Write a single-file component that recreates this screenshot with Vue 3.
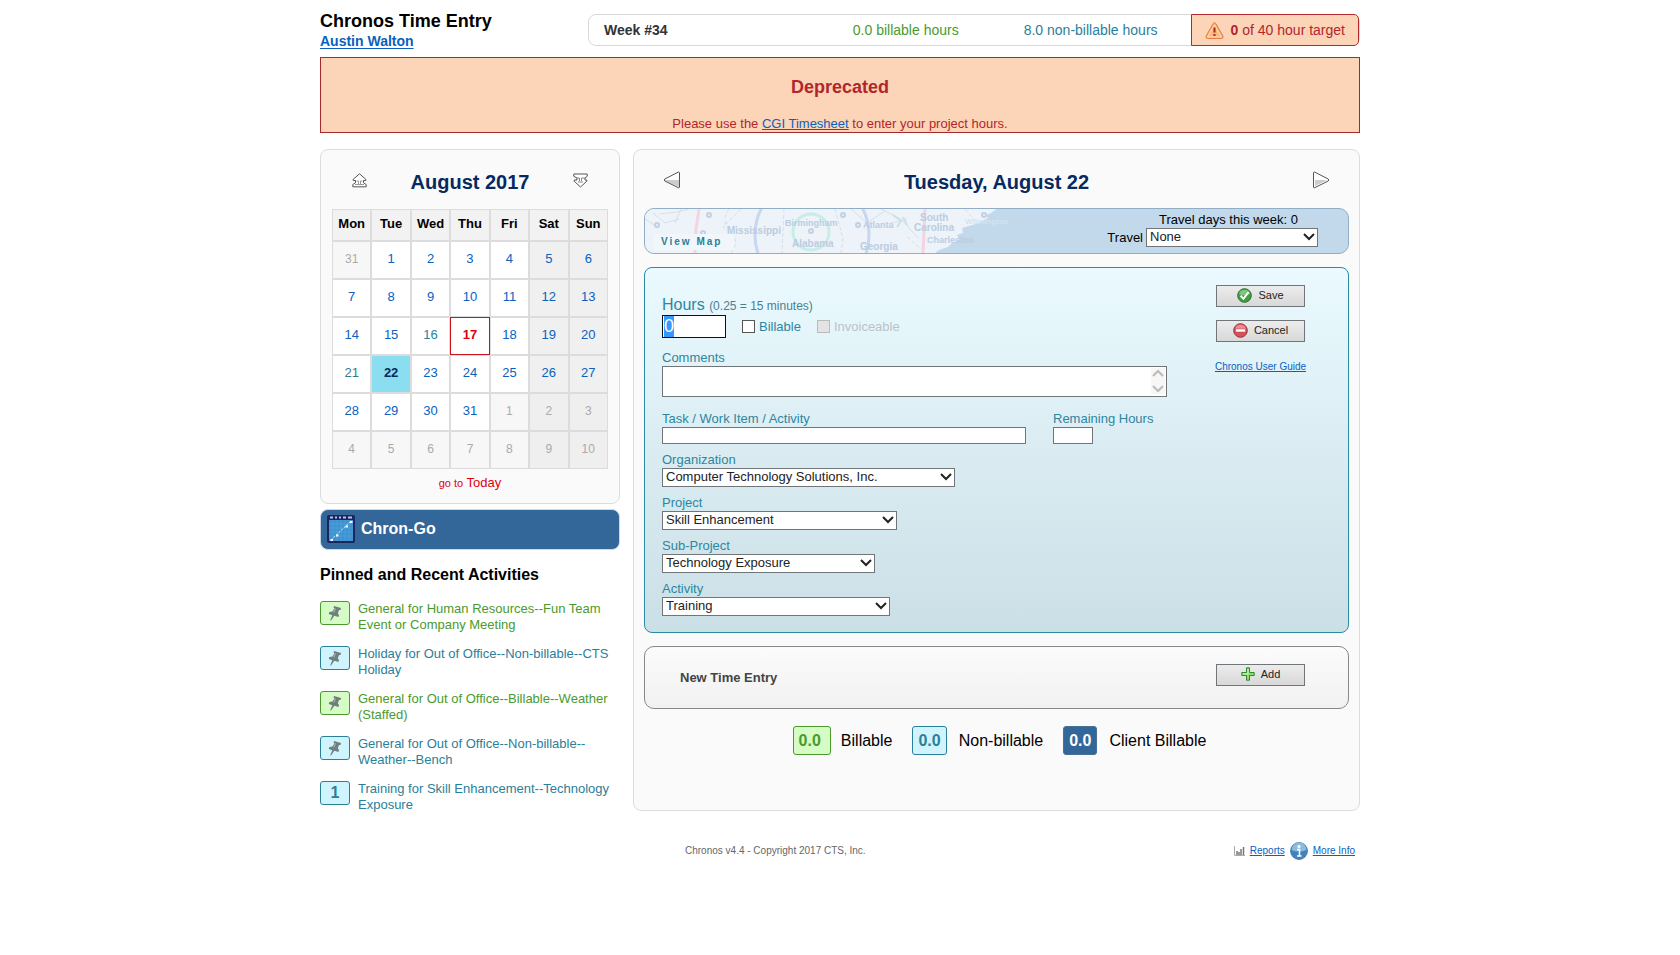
<script setup>
import { onMounted, ref } from 'vue'

const weekdays = ['Mon', 'Tue', 'Wed', 'Thu', 'Fri', 'Sat', 'Sun']

// Six weeks starting on Monday, July 31
const weeks = Array.from({ length: 6 }, (_, w) =>
  Array.from({ length: 7 }, (_, d) => {
    const offset = w * 7 + d
    const other = offset < 1 || offset > 31
    const day = offset < 1 ? 31 : offset > 31 ? offset - 31 : offset
    return {
      day,
      other,
      weekend: d > 4,
      logged: !other && (day === 16 || day === 21),
      today: !other && day === 17,
      selected: !other && day === 22
    }
  })
)

const activities = [
  { kind: 'billable', text: 'General for Human Resources--Fun Team Event or Company Meeting' },
  { kind: 'nonbillable', text: 'Holiday for Out of Office--Non-billable--CTS Holiday' },
  { kind: 'billable', text: 'General for Out of Office--Billable--Weather (Staffed)' },
  { kind: 'nonbillable', text: 'General for Out of Office--Non-billable--Weather--Bench' },
  { kind: 'nonbillable', text: 'Training for Skill Enhancement--Technology Exposure', count: 1 }
]

const choices = [
  { id: 'organization', label: 'Organization', value: 'Computer Technology Solutions, Inc.' },
  { id: 'project', label: 'Project', value: 'Skill Enhancement' },
  { id: 'subproject', label: 'Sub-Project', value: 'Technology Exposure' },
  { id: 'activity', label: 'Activity', value: 'Training' }
]

const hours = ref('0')
const hoursInput = ref(null)

onMounted(() => {
  hoursInput.value.focus()
  hoursInput.value.select()
})
</script>

<template>
  <div class="page">
    <header class="top">
      <div class="brand">
        <h1>Chronos Time Entry</h1>
        <a href="#user">Austin Walton</a>
      </div>
      <div class="stats">
        <strong class="week">Week #34</strong>
        <span class="stat green">0.0 billable hours</span>
        <span class="stat teal">8.0 non-billable hours</span>
        <div class="target">
          <svg width="19" height="17" viewBox="0 0 19 17" aria-hidden="true">
            <path d="M8.4 1.3 Q9.5 0 10.6 1.3 L18 14.3 Q18.4 16.3 16.7 16.4 H2.3 Q.6 16.3 1 14.3Z" fill="#fbb77c" stroke="#e3733a" />
            <path d="M9.5 3 L16.3 15 H2.7Z" fill="none" stroke="#fde0bd" />
            <path d="M9.5 5.5 V10.5 M9.5 12 V14" stroke="#a52a22" stroke-width="2" />
          </svg>
          <span><b>0</b> of 40 hour target</span>
        </div>
      </div>
    </header>

    <section class="banner">
      <h2>Deprecated</h2>
      <p>Please use the <a href="#timesheet">CGI Timesheet</a> to enter your project hours.</p>
    </section>

    <div class="columns">
      <aside>
        <section class="panel calendar">
          <div class="panel-head">
            <button class="nav" type="button" aria-label="Previous month">
              <svg width="15" height="15" viewBox="0 0 15 15" aria-hidden="true">
                <path d="M7.5 .8 L13.8 6.3 V7.5 H11.5 V9.8 L14.2 11.5 V13.8 H.8 V11.5 L3.5 9.8 V7.5 H1.2 V6.3Z" fill="#fff" stroke="#555" />
                <path d="M4.5 8 H6.5 V11 M10.5 8 H8.5 V11 M3 11.5 H12" fill="none" stroke="#999" />
              </svg>
            </button>
            <h2>August 2017</h2>
            <button class="nav" type="button" aria-label="Next month">
              <svg width="15" height="15" viewBox="0 0 15 15" aria-hidden="true">
                <path d="M.8 1 H14.2 V3.3 L12 5 V7 H13.8 V8.2 L7.5 14 L1.2 8.2 V7 H4 V5 L.8 3.3Z" fill="#fff" stroke="#555" />
                <path d="M4 5 H6.5 V8 M12 5 H8.5 V8 M5 9 H10" fill="none" stroke="#888" />
              </svg>
            </button>
          </div>
          <table>
            <thead>
              <tr>
                <th v-for="name in weekdays" :key="name" scope="col">{{ name }}</th>
              </tr>
            </thead>
            <tbody>
              <tr v-for="(week, w) in weeks" :key="w">
                <td
                  v-for="cell in week"
                  :key="cell.day"
                  :class="{ other: cell.other, weekend: cell.weekend, logged: cell.logged, today: cell.today, selected: cell.selected }"
                >
                  <a href="#day">{{ cell.day }}</a>
                </td>
              </tr>
            </tbody>
          </table>
          <a class="goto" href="#today"><small>go to</small> Today</a>
        </section>

        <a class="chrongo" href="#chrongo">
          <svg width="28" height="28" viewBox="0 0 28 28" aria-hidden="true">
            <rect width="28" height="28" rx="2" fill="#1d2560" />
            <rect x="2" y="5" width="24" height="21" fill="#3d92cf" />
            <path d="M6 5V26M10 5V26M14 5V26M18 5V26M22 5V26M2 9H26M2 13H26M2 17H26M2 21H26" stroke="#5aaadd" stroke-width=".5" />
            <path d="M3 2.5H6M8 2.5H10M12 2.5H14M16 2.5H19M21 2.5H25" stroke="#b8c3e8" stroke-width="2" />
            <path d="M4 25 L24 6" stroke="#d6ecfa" stroke-dasharray="2 1.5" />
            <path d="M3.500 24h2.500v2h-2.500zM9 19.500h2.500v2H9zM18.500 10.500H21v2h-2.500zM23 6h2.500v2H23z" fill="#fff" />
          </svg>
          Chron-Go
        </a>

        <h3>Pinned and Recent Activities</h3>
        <ul class="activities">
          <li v-for="item in activities" :key="item.text" :class="item.kind">
            <span class="chip">
              <template v-if="item.count">{{ item.count }}</template>
              <svg v-else width="14" height="16" viewBox="0 0 14 16" aria-hidden="true">
                <path d="M6 1 L13 3 L12.500 5 L11 5 L9.800 8.300 L11 10 L10.500 12 L6.300 10.800 L3 15.500 L2.200 15.200 L4.300 10.200 L.8 9 L1.300 7 L4.500 6.500 L6.500 3.300 L5.500 2.500Z" fill="#6f7f7f" />
                <path d="M7.500 3.500 L5.800 7.500" stroke="#a9b8b8" />
              </svg>
            </span>
            <a href="#activity-entry">{{ item.text }}</a>
          </li>
        </ul>
      </aside>

      <main class="panel">
        <div class="panel-head day-head">
          <button class="nav" type="button" aria-label="Previous day">
            <svg width="18" height="18" viewBox="0 0 18 18" aria-hidden="true">
              <path d="M15.500 1 Q16.500 1 16.500 2 V16 Q16.500 17 15.500 16.800 L1.800 10 Q.5 9 1.800 8Z" fill="#fff" />
              <path d="M2 9 H16 V16 L3 10.300Z" fill="#ccc" />
              <path d="M15.500 1 Q16.500 1 16.500 2 V16 Q16.500 17 15.500 16.800 L1.800 10 Q.5 9 1.800 8Z" fill="none" stroke="#555" />
            </svg>
          </button>
          <h2>Tuesday, August 22</h2>
          <button class="nav" type="button" aria-label="Next day">
            <svg width="18" height="18" viewBox="0 0 18 18" aria-hidden="true">
              <path d="M2.500 1 Q1.500 1 1.500 2 V16 Q1.500 17 2.500 16.800 L16.200 10 Q17.500 9 16.200 8Z" fill="#fff" />
              <path d="M14 9 H3 V15 L13 10.300Z" fill="#ccc" />
              <path d="M2.500 1 Q1.500 1 1.500 2 V16 Q1.500 17 2.500 16.800 L16.200 10 Q17.500 9 16.200 8Z" fill="none" stroke="#555" />
            </svg>
          </button>
        </div>

        <section class="travel">
          <svg class="map" width="370" height="44" viewBox="0 0 370 44" aria-hidden="true">
            <path d="M0 0H352L346 4L341 6L343 9L334 14L324 17L317 19L318 24L312 26L314 31L307 34L303 38L294 41L290 44H0Z" fill="#edf3f8" />
            <g fill="none" stroke="#d3e0ea">
              <path d="M0 10 L14 19 M8 4 L20 14 L34 10 M14 5 L32 3 L44 0 M36 0 L30 14" />
              <path d="M84 0 Q76 12 84 20 M96 0 L78 18 L88 26 Q94 34 86 44 M139 0 L137 44 M190 0 L198 30 L196 44 M262 28 L276 40 M320 0 L330 12" stroke-dasharray="4 2" />
              <path d="M206 0 L222 14 L240 2 M236 0 L256 10 L274 30 M246 14 L262 10" />
            </g>
            <path d="M248 6 L256 12 L252 18 M258 8 L262 16" fill="none" stroke="#c9e2e6" stroke-width="2" />
            <g fill="none" stroke="#f5d3e2" stroke-width="3">
              <path d="M54 0 Q52 14 51 20 L50 44" />
              <path d="M280 0 L279 22 L278 44" />
            </g>
            <circle cx="167" cy="26" r="57" fill="none" stroke="#c5d8f0" stroke-width="3" />
            <circle cx="166" cy="23" r="18" fill="none" stroke="#c6ede6" stroke-width="3" />
            <g fill="none" stroke="#c3d0e4" stroke-width="2">
              <circle cx="64" cy="6" r="2" />
              <circle cx="12" cy="16" r="2" />
              <circle cx="58" cy="24" r="2" />
              <circle cx="166" cy="22" r="2" />
              <circle cx="198" cy="6" r="2" />
              <circle cx="213" cy="16" r="2" />
              <circle cx="339" cy="6" r="2" />
            </g>
            <g class="states">
              <text x="82" y="25">Mississippi</text>
              <text x="147" y="38">Alabama</text>
              <text x="215" y="41">Georgia</text>
              <text x="275" y="12">South</text>
              <text x="269" y="22">Carolina</text>
            </g>
            <g class="towns">
              <text x="140" y="17">Birmingham</text>
              <text x="218" y="19">Atlanta</text>
              <text x="282" y="34">Charleston</text>
              <text class="coast" x="320" y="15">Wilmington</text>
            </g>
          </svg>
          <a class="view-map" href="#map">View Map</a>
          <div class="travel-form">
            <span>Travel days this week: 0</span>
            <div class="travel-row">
              <label for="travel">Travel</label>
              <span class="select travel-select">
                <select id="travel"><option>None</option></select>
                <svg width="12" height="8" viewBox="0 0 12 8" aria-hidden="true"><path d="M1 1 L6 6 L11 1" /></svg>
              </span>
            </div>
          </div>
        </section>

        <form class="entry" @submit.prevent>
          <div class="fields">
            <label class="hours-label" for="hours">Hours <small>(0.25 = 15 minutes)</small></label>
            <div class="hours-row">
              <input id="hours" ref="hoursInput" v-model="hours" class="hours" type="text" />
              <label class="tick"><input type="checkbox" /> Billable</label>
              <label class="tick off"><input type="checkbox" disabled /> Invoiceable</label>
            </div>
            <div class="field comments">
              <label for="comments">Comments</label>
              <div class="area">
                <textarea id="comments"></textarea>
                <svg width="14" height="26" viewBox="0 0 14 26" aria-hidden="true">
                  <path d="M2 8 L7 3 L12 8 M2 18 L7 23 L12 18" />
                </svg>
              </div>
            </div>
            <div class="task-row">
              <div class="field task">
                <label for="task">Task / Work Item / Activity</label>
                <input id="task" type="text" />
              </div>
              <div class="field remaining">
                <label for="remaining">Remaining Hours</label>
                <input id="remaining" type="text" />
              </div>
            </div>
            <div v-for="choice in choices" :key="choice.id" class="field choice">
              <label :for="choice.id">{{ choice.label }}</label>
              <span class="select" :class="choice.id">
                <select :id="choice.id"><option>{{ choice.value }}</option></select>
                <svg width="12" height="8" viewBox="0 0 12 8" aria-hidden="true"><path d="M1 1 L6 6 L11 1" /></svg>
              </span>
            </div>
          </div>
          <div class="actions">
            <button class="action" type="submit">
              <svg width="15" height="15" viewBox="0 0 15 15" aria-hidden="true">
                <circle cx="7.500" cy="7.500" r="6.800" fill="#3f9c41" stroke="#2c7030" />
                <path d="M2 6 A5.700 5.700 0 0 1 13 6 Q8 9 2 6Z" fill="#7cc67a" />
                <path d="M3.500 7.800 L6.500 10.800 L11.500 4" fill="none" stroke="#fff" stroke-width="2" />
              </svg>
              Save
            </button>
            <button class="action" type="button">
              <svg width="15" height="15" viewBox="0 0 15 15" aria-hidden="true">
                <circle cx="7.500" cy="7.500" r="6.800" fill="#d9505a" stroke="#9e2f3a" />
                <path d="M2 6 A5.700 5.700 0 0 1 13 6Z" fill="#e98d92" />
                <rect x="2.500" y="6" width="10" height="3" fill="#fff" stroke="#b04048" stroke-width=".5" />
              </svg>
              Cancel
            </button>
            <a class="guide" href="#guide">Chronos User Guide</a>
          </div>
        </form>

        <section class="new-entry">
          <strong>New Time Entry</strong>
          <button class="action" type="button">
            <svg width="14" height="14" viewBox="0 0 14 14" aria-hidden="true">
              <path d="M5.500 .8H8.500V5.500H13.200V8.500H8.500V13.200H5.500V8.500H.8V5.500H5.500Z" fill="#8fdc6c" stroke="#2f8a2f" />
              <path d="M7 2V7H2" fill="none" stroke="#d3f7bd" />
            </svg>
            Add
          </button>
        </section>

        <div class="legend">
          <span class="total billable wide">0.0</span><span>Billable</span>
          <span class="total nonbillable">0.0</span><span>Non-billable</span>
          <span class="total client">0.0</span><span>Client Billable</span>
        </div>
      </main>
    </div>

    <footer>
      <span class="copyright">Chronos v4.4 - Copyright 2017 CTS, Inc.</span>
      <nav>
        <svg width="11" height="10" viewBox="0 0 11 10" aria-hidden="true">
          <path d="M.5 0V9.500H11" fill="none" stroke="#aaa" />
          <path d="M3 5V9M5 6V9M7 3V9M9.500 1V9" stroke="#777" stroke-width="1.500" />
        </svg>
        <a href="#reports">Reports</a>
        <svg width="18" height="18" viewBox="0 0 18 18" aria-hidden="true">
          <circle cx="9" cy="9" r="8.400" fill="#3f82bd" stroke="#4a7aa3" />
          <path d="M1.500 8 A7.500 7.500 0 0 1 16.500 8 Q9 11 1.500 8Z" fill="#8cbbe0" />
          <circle cx="9" cy="4.500" r="1.600" fill="#fff" />
          <path d="M7 7.500H9.500V13.500M7 14H11.500" fill="none" stroke="#fff" stroke-width="1.500" />
        </svg>
        <a href="#info">More Info</a>
      </nav>
    </footer>
  </div>
</template>

<style>
body {
  background: #fff;
}
</style>

<style scoped>
.page {
  max-width: 1040px;
  margin: 0 auto;
  padding-top: 10px;
  font-family: "Liberation Sans", Arial, sans-serif;
  font-size: 13px;
  line-height: 16px;
  color: #000;
}
.page *,
.page *::before {
  box-sizing: border-box;
}
h1, h2, h3, p, ul {
  margin: 0;
  padding: 0;
}
a {
  color: #0a61c0;
}
button,
input,
select,
textarea {
  font-family: inherit;
  margin: 0;
}
svg {
  flex: none;
}
.green {
  color: #4a9a2c;
}
.teal {
  color: #2a8099;
}

/* Header */
.top {
  display: flex;
  justify-content: space-between;
  height: 47px;
}
.brand h1 {
  font-size: 18px;
  line-height: 22px;
}
.brand a {
  display: block;
  font-size: 14px;
  font-weight: bold;
  line-height: 18px;
  text-underline-offset: 2px;
}
.stats {
  display: flex;
  align-items: center;
  width: 772px;
  height: 32px;
  margin-top: 4px;
  padding-left: 15px;
  border: 1px solid #d8d8d8;
  border-radius: 8px;
  font-size: 14px;
}
.week {
  flex: 1;
  color: #333;
}
.stat {
  margin-right: 65px;
}
.stat.teal {
  margin-right: 33px;
}
.target {
  display: flex;
  align-items: center;
  gap: 7px;
  height: 32px;
  padding: 0 13px;
  border: 1px solid #b32a2e;
  border-radius: 0 5px 5px 0;
  background: #fcd4b8;
  color: #b2262b;
}

/* Deprecation banner */
.banner {
  padding-top: 17px;
  border: 1px solid #a52a2a;
  background: #fcd4b8;
  color: #b2262b;
  text-align: center;
}
.banner h2 {
  margin-bottom: 17px;
  font-size: 18px;
  line-height: 24px;
}

/* Panels */
.columns {
  display: grid;
  grid-template-columns: 300px minmax(0, 1fr);
  align-items: start;
  gap: 13px;
  margin-top: 16px;
}
.panel {
  border: 1px solid #dcdcdc;
  border-radius: 8px;
  background: #fafafa;
}
.panel-head {
  display: flex;
  justify-content: space-between;
  align-items: center;
  padding: 21px 20px 16px;
}
.panel-head h2 {
  font-size: 20px;
  line-height: 22px;
  color: #062a60;
}
.nav {
  display: flex;
  padding: 0;
  border: 0;
  background: none;
}
.nav svg {
  margin-bottom: 4px;
}

/* Calendar */
.calendar {
  padding: 0 11px 11px;
  text-align: center;
}
table {
  width: 100%;
  table-layout: fixed;
  border-collapse: separate;
  border-spacing: 0;
}
th,
td {
  padding: 0 0 2px;
  border: 1px solid #dcdcdc;
}
th {
  height: 32px;
  background: #f2f2f2;
}
td {
  height: 38px;
  background: #fff;
}
td a {
  text-decoration: none;
}
td.weekend {
  background: #f0f0f0;
}
td.other {
  background: #f7f7f7;
  font-size: 12px;
}
td.other.weekend {
  background: #efefef;
}
td.other a {
  color: #aaa;
}
td.logged a {
  color: #2a8099;
}
td.today {
  border-color: #c8141c;
  font-weight: bold;
}
td.today a {
  color: #e00010;
}
td.selected {
  background: #8adeef;
  font-weight: bold;
}
td.selected a {
  color: #062a60;
}
.goto {
  display: block;
  margin-top: 5px;
  line-height: 18px;
  color: #e00010;
  text-decoration: none;
}
.goto small {
  font-size: 11px;
}

.chrongo {
  display: flex;
  align-items: center;
  gap: 6px;
  height: 41px;
  margin-top: 5px;
  padding: 0 0 2px 6px;
  border: 1px solid #cbd9e8;
  border-radius: 8px;
  background: #336699;
  color: #fff;
  font-size: 16px;
  font-weight: bold;
  text-decoration: none;
}
h3 {
  margin: 15px 0 16px;
  font-size: 16px;
  line-height: 20px;
}
.activities {
  display: grid;
  gap: 13px;
  list-style: none;
}
.activities li {
  display: flex;
  align-items: flex-start;
  gap: 8px;
}
.activities a {
  color: inherit;
  text-decoration: none;
}
.billable {
  color: #4a9a2c;
}
.nonbillable {
  color: #2a8099;
}
.chip {
  display: flex;
  flex: none;
  align-items: center;
  justify-content: center;
  width: 30px;
  height: 24px;
  border: 1px solid;
  border-radius: 3px;
  font-size: 16px;
  font-weight: bold;
}
.billable .chip,
.total.billable {
  background: #d4fcc4;
}
.nonbillable .chip,
.total.nonbillable {
  background: #d0f4fd;
}

/* Day panel */
main {
  padding: 0 10px 55px;
}
.day-head {
  padding: 21px 19px 15px;
}
.travel {
  position: relative;
  display: flex;
  justify-content: flex-end;
  height: 46px;
  padding-right: 30px;
  border: 1px solid #92aec6;
  border-radius: 10px;
  background: #c1d9ea;
  overflow: hidden;
}
.map {
  position: absolute;
  left: 0;
  top: 0;
}
.map text {
  font-weight: bold;
  fill: #b9cde2;
}
.states text {
  font-size: 10px;
}
.towns text {
  font-size: 9px;
}
.towns .coast {
  font-size: 8px;
  fill: #d3e3f0;
}
.view-map {
  position: absolute;
  left: 8px;
  bottom: 3px;
  padding: 0 12px 0 8px;
  background: #f1f6fa;
  color: #2a8099;
  font-size: 10px;
  font-weight: bold;
  letter-spacing: 2px;
  text-decoration: none;
}
.travel-form {
  display: flex;
  flex-direction: column;
  align-items: flex-end;
  padding-top: 3px;
}
.travel-form > span {
  margin-right: 20px;
}
.travel-row {
  display: flex;
  align-items: center;
  gap: 3px;
}
.select {
  position: relative;
  display: block;
  max-width: 100%;
}
.select select {
  display: block;
  width: 100%;
  height: 19px;
  padding: 0 18px 1px 3px;
  border: 1px solid #70757a;
  border-radius: 0;
  background: #fff;
  color: #222;
  font-size: 13px;
  line-height: 16px;
  appearance: none;
}
.select svg {
  position: absolute;
  right: 3px;
  top: 5px;
  fill: none;
  stroke: #222;
  stroke-width: 2;
  pointer-events: none;
}
.travel-select {
  width: 172px;
}

.entry {
  display: flex;
  justify-content: space-between;
  margin-top: 13px;
  padding: 17px 43px 16px 17px;
  border: 1px solid #2a8ca0;
  border-radius: 8px;
  background: linear-gradient(#eafaff, #cbdfe6);
  color: #2e86a0;
}
.fields {
  flex: 1;
  max-width: 505px;
  padding-top: 10px;
}
.fields label {
  display: block;
}
.fields .hours-label {
  height: 20px;
  font-size: 16px;
  line-height: 20px;
}
.hours-label small {
  font-size: 12px;
  color: #4b7f90;
}
.hours-row {
  display: flex;
  align-items: center;
}
.fields input[type="text"] {
  display: block;
  height: 17px;
  padding: 0 2px;
  border: 1px solid #70757a;
  border-radius: 0;
  background: #fff;
}
.fields .hours-row .hours {
  width: 64px;
  height: 23px;
  padding: 0 1px;
  border-color: #111;
  outline: none;
  font-size: 18px;
}
.hours::selection {
  background: #3399ff;
  color: #fff;
}
.fields .tick {
  display: flex;
  align-items: center;
  gap: 4px;
  margin-left: 16px;
}
.tick input {
  width: 13px;
  height: 13px;
  border: 1px solid #555;
  background: #fff;
  appearance: none;
}
.tick.off {
  color: #b9c3c6;
}
.tick.off input {
  border-color: #bbb;
  background: #e2e4e4;
}
.comments {
  margin-top: 12px;
}
.area {
  position: relative;
}
.area textarea {
  display: block;
  width: 100%;
  height: 31px;
  border: 1px solid #70757a;
  border-radius: 0;
  background: #fff;
  overflow: hidden;
  resize: none;
}
.area svg {
  position: absolute;
  top: 2px;
  right: 2px;
  background: #f7f7f7;
  fill: none;
  stroke: #bbb;
  stroke-width: 2;
  pointer-events: none;
}
.task-row {
  display: flex;
  gap: 27px;
  margin-top: 14px;
}
.task {
  flex: 1;
}
.task input {
  width: 100%;
}
.remaining {
  width: 114px;
}
.remaining input {
  width: 40px;
}
.choice {
  margin-top: 8px;
}
.organization {
  width: 293px;
}
.project {
  width: 235px;
}
.subproject {
  width: 213px;
}
.activity {
  width: 228px;
}
.actions {
  display: flex;
  flex-direction: column;
  align-items: center;
  gap: 13px;
  width: 89px;
}
.action {
  display: flex;
  align-items: center;
  justify-content: center;
  gap: 6px;
  width: 89px;
  height: 22px;
  padding: 0 0 2px;
  border: 1px solid #70757a;
  border-radius: 0;
  background: linear-gradient(#ececec, #d8d8d8);
  color: #222;
  font-size: 11px;
}
.guide {
  margin-top: 4px;
  font-size: 10px;
  white-space: nowrap;
}
.new-entry {
  display: flex;
  align-items: flex-start;
  justify-content: space-between;
  margin-top: 13px;
  padding: 17px 43px 16px 35px;
  border: 1px solid #888;
  border-radius: 10px;
  background: linear-gradient(#fbfbfb, #f1f1f1);
  color: #444;
}
.new-entry strong {
  line-height: 28px;
}
.legend {
  display: flex;
  flex-wrap: wrap;
  align-items: center;
  justify-content: center;
  margin-top: 17px;
  font-size: 16px;
}
.total {
  margin: 0 12px 0 20px;
  padding: 0 5px;
  border: 1px solid;
  border-radius: 3px;
  font-weight: bold;
  line-height: 27px;
}
.total.wide {
  margin: 0 10px 0 6px;
  padding-right: 9px;
}
.total.client {
  border-color: #4a6f96;
  background: #336699;
  color: #fff;
}

footer {
  display: flex;
  align-items: center;
  justify-content: space-between;
  margin-top: 29px;
  padding: 0 5px 0 365px;
  font-size: 10px;
}
.copyright {
  color: #666;
}
footer nav {
  display: flex;
  align-items: center;
  gap: 5px;
}
</style>
